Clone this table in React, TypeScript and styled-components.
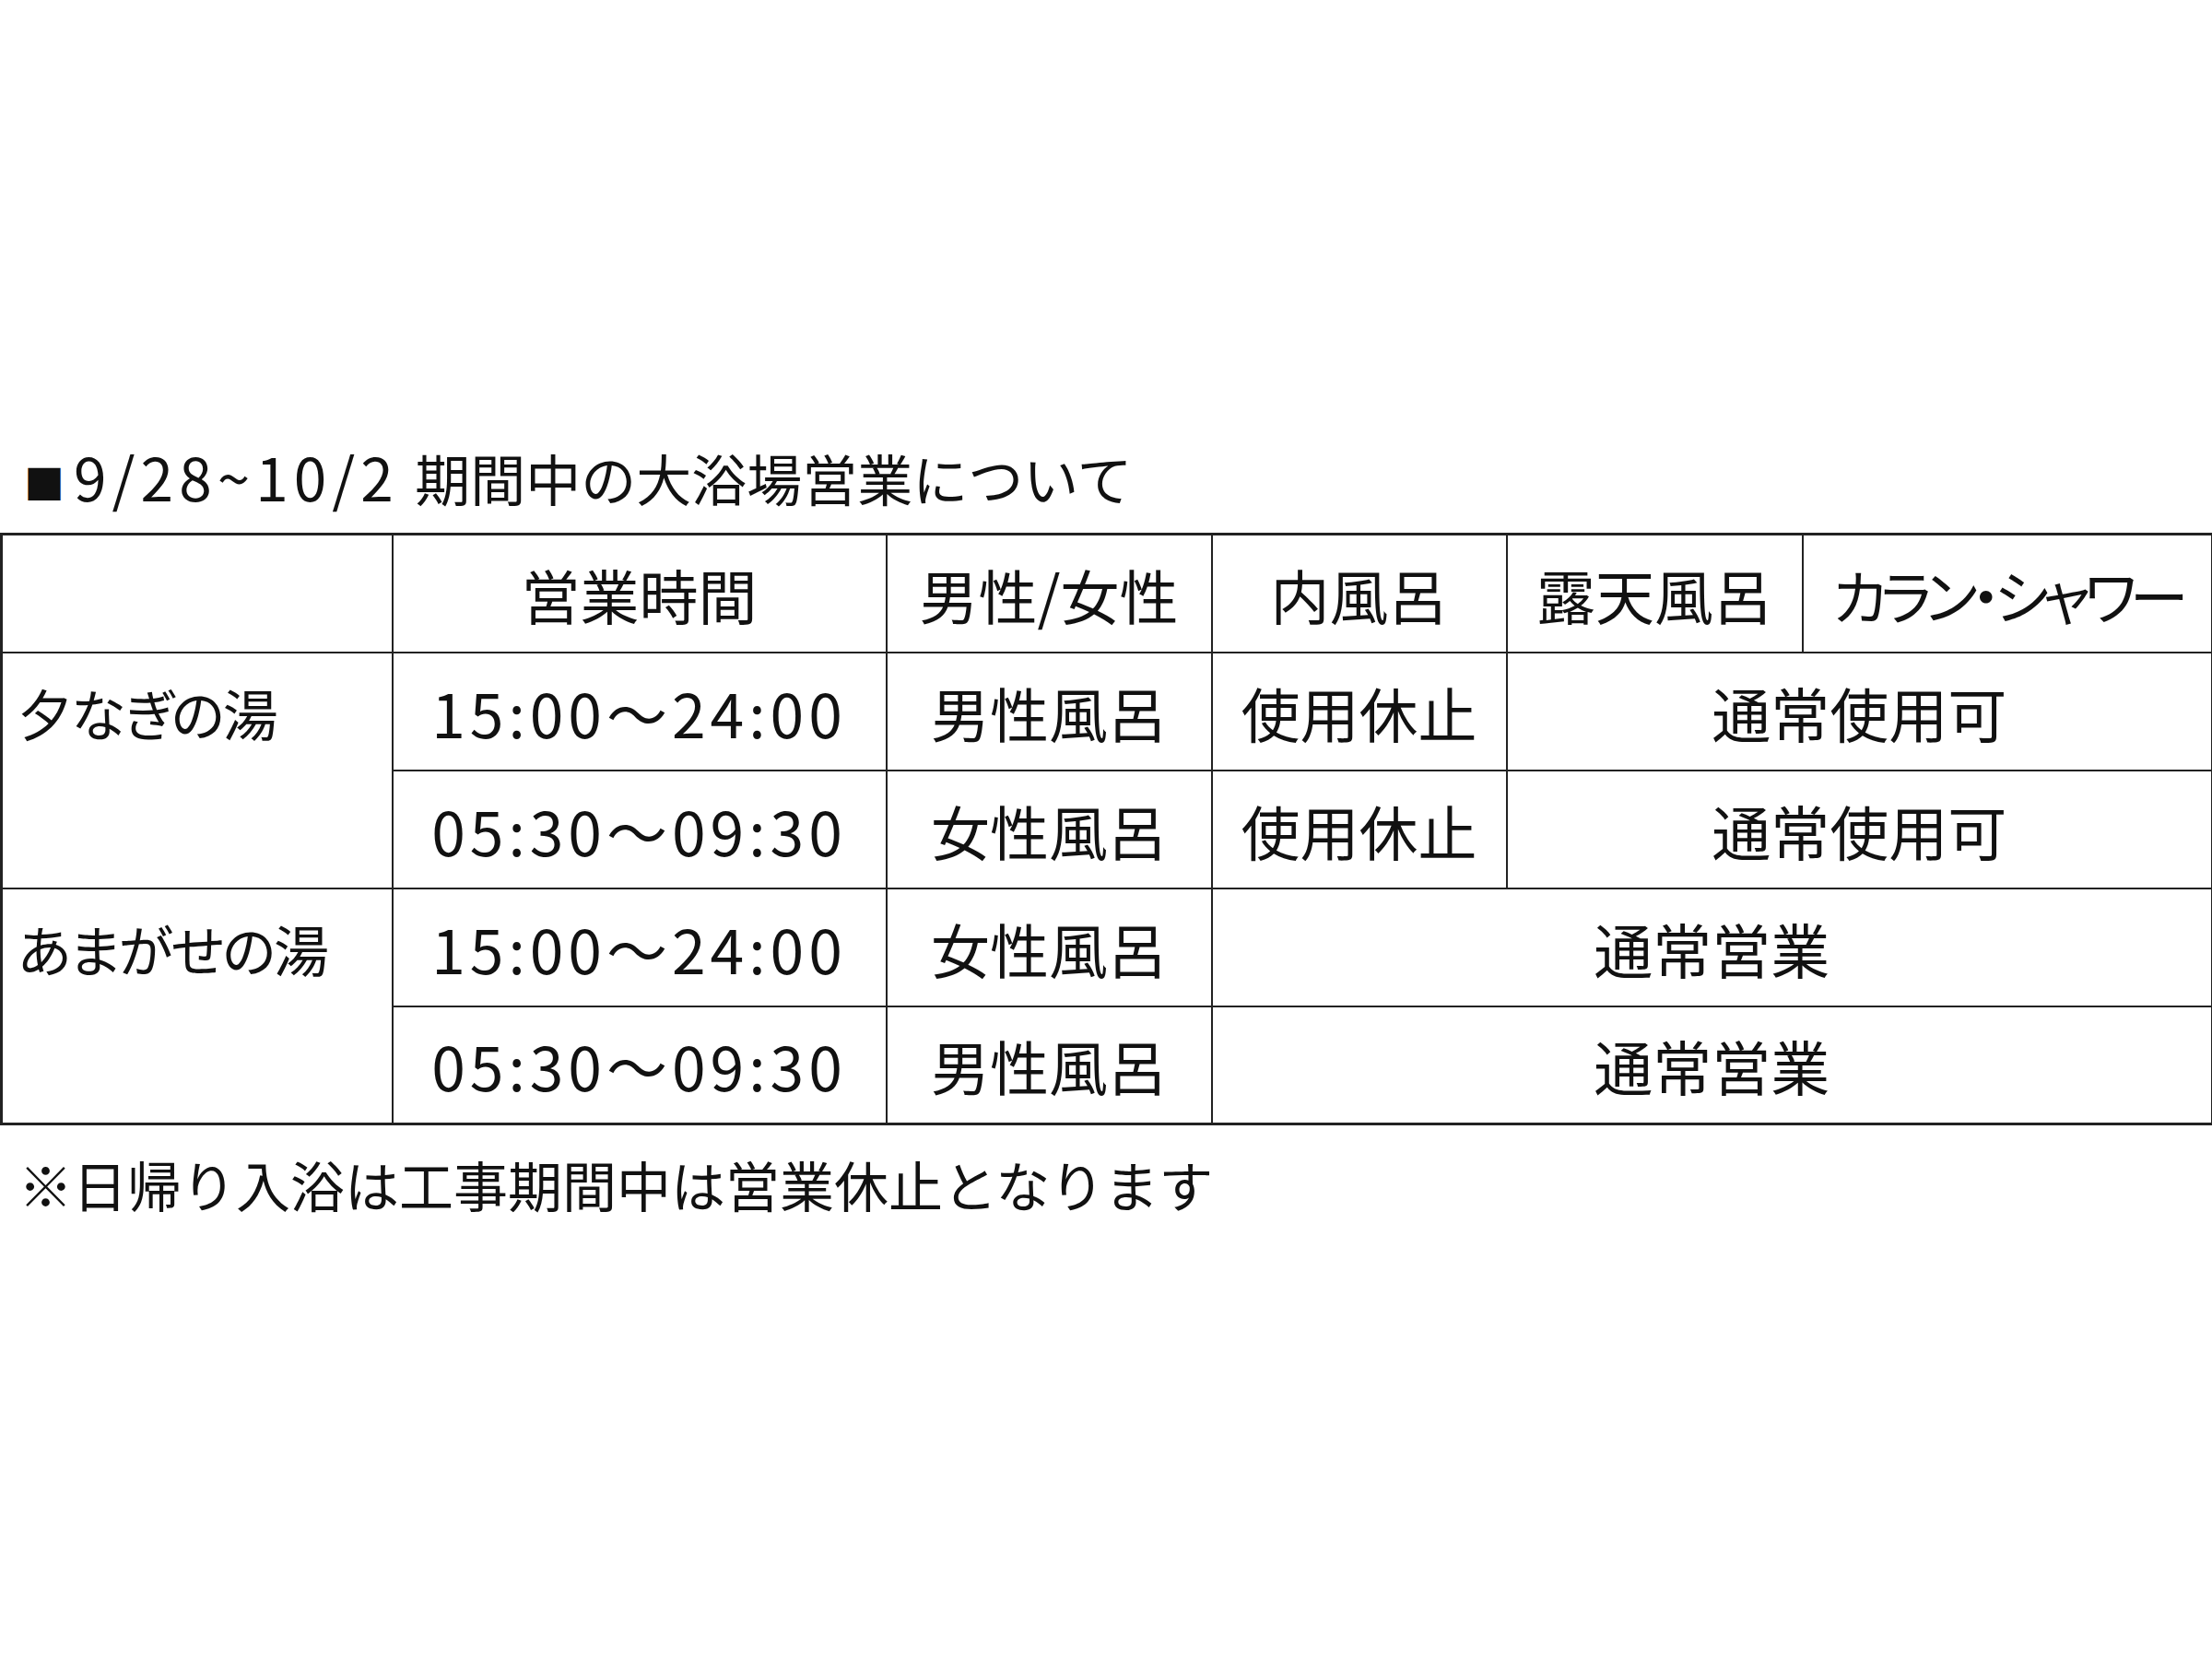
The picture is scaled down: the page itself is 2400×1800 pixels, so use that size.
import React from "react";
import styled, { createGlobalStyle } from "styled-components";

type Row = {
  place?: string;
  span?: number;
  time: string;
  bath: string;
  inner?: string;
  rest: string;
  restSpan: number;
};

const rows: Row[] = [
  { place: "夕なぎの湯", span: 2, time: "15:00～24:00", bath: "男性風呂", inner: "使用休止", rest: "通常使用可", restSpan: 2 },
  { time: "05:30～09:30", bath: "女性風呂", inner: "使用休止", rest: "通常使用可", restSpan: 2 },
  { place: "あまがせの湯", span: 2, time: "15:00～24:00", bath: "女性風呂", rest: "通常営業", restSpan: 3 },
  { time: "05:30～09:30", bath: "男性風呂", rest: "通常営業", restSpan: 3 },
];

const headers = ["営業時間", "男性/女性", "内風呂", "露天風呂", "カラン・シャワー"];
const colWidths = [424, 536, 353, 320, 321, 445];

export default function App() {
  return (
    <Page>
      <GlobalStyle />
      <Heading>
        <Mark>■</Mark>
        <Dates>9/28~10/2</Dates> 期間中の大浴場営業について
      </Heading>
      <Table>
        <colgroup>
          {colWidths.map((w, i) => (
            <col key={i} style={{ width: w }} />
          ))}
        </colgroup>
        <tbody>
          <tr>
            <Cell />
            {headers.map((h) => (
              <Cell key={h} $center $narrow={h === "カラン・シャワー"}>
                {h}
              </Cell>
            ))}
          </tr>
          {rows.map((r, i) => (
            <tr key={i}>
              {r.place && <PlaceCell rowSpan={r.span}>{r.place}</PlaceCell>}
              <TimeCell>{r.time}</TimeCell>
              <Cell $center>{r.bath}</Cell>
              {r.inner && <Cell $center>{r.inner}</Cell>}
              <Cell $center colSpan={r.restSpan}>
                {r.rest}
              </Cell>
            </tr>
          ))}
        </tbody>
      </Table>
      <Note>※日帰り入浴は工事期間中は営業休止となります</Note>
    </Page>
  );
}

const GlobalStyle = createGlobalStyle`
  body {
    margin: 0;
    background: #ffffff;
    color: #111111;
    font-family: "Noto Sans CJK JP", "Noto Sans", sans-serif;
  }
`;

const Page = styled.div`
  width: 2400px;
  height: 1800px;
  padding-top: 476px;
  box-sizing: border-box;
  overflow: hidden;
`;

const Heading = styled.div`
  font-size: 60px;
  line-height: 80px;
  height: 80px;
  padding-left: 26px;
  margin-bottom: 22px;
  white-space: nowrap;
`;

const Mark = styled.span`
  font-size: 44px;
  margin-right: 10px;
  vertical-align: 2px;
`;

const Dates = styled.span`
  font-size: 64px;
  letter-spacing: 6px;
  margin-right: 4px;
`;

const Table = styled.table`
  width: 2399px;
  border-collapse: collapse;
  table-layout: fixed;
  border: 3px solid #222222;

  tr {
    height: 128px;
  }
`;

const Cell = styled.td<{ $center?: boolean; $narrow?: boolean }>`
  border: 2px solid #222222;
  padding: 0;
  font-size: 64px;
  line-height: 80px;
  text-align: ${(p) => (p.$center ? "center" : "left")};
  vertical-align: middle;
  white-space: nowrap;
  overflow: hidden;
  font-feature-settings: ${(p) => (p.$narrow ? '"palt"' : "normal")};
  letter-spacing: ${(p) => (p.$narrow ? "-7px" : "0")};
`;

const PlaceCell = styled(Cell)`
  vertical-align: top;
  padding: 24px 0 0 16px;
  font-size: 60px;
  font-feature-settings: "palt";
  letter-spacing: -2px;
`;

const TimeCell = styled(Cell)`
  text-align: center;
  font-size: 66px;
  letter-spacing: 5px;
`;

const Note = styled.div`
  font-size: 59px;
  line-height: 80px;
  padding-left: 20px;
  margin-top: 24px;
  white-space: nowrap;
`;
